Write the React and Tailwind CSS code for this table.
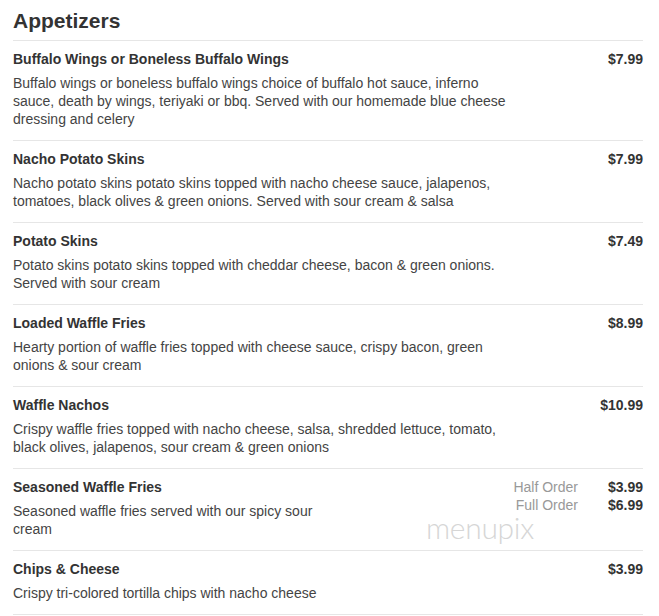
import React from "react";

const items = [
  {
    name: "Buffalo Wings or Boneless Buffalo Wings",
    desc: "Buffalo wings or boneless buffalo wings choice of buffalo hot sauce, inferno sauce, death by wings, teriyaki or bbq. Served with our homemade blue cheese dressing and celery",
    prices: [{ price: "$7.99" }],
  },
  {
    name: "Nacho Potato Skins",
    desc: "Nacho potato skins potato skins topped with nacho cheese sauce, jalapenos, tomatoes, black olives & green onions. Served with sour cream & salsa",
    prices: [{ price: "$7.99" }],
  },
  {
    name: "Potato Skins",
    desc: "Potato skins potato skins topped with cheddar cheese, bacon & green onions. Served with sour cream",
    prices: [{ price: "$7.49" }],
  },
  {
    name: "Loaded Waffle Fries",
    desc: "Hearty portion of waffle fries topped with cheese sauce, crispy bacon, green onions & sour cream",
    prices: [{ price: "$8.99" }],
  },
  {
    name: "Waffle Nachos",
    desc: "Crispy waffle fries topped with nacho cheese, salsa, shredded lettuce, tomato, black olives, jalapenos, sour cream & green onions",
    prices: [{ price: "$10.99" }],
  },
  {
    name: "Seasoned Waffle Fries",
    desc: "Seasoned waffle fries served with our spicy sour cream",
    prices: [
      { label: "Half Order", price: "$3.99" },
      { label: "Full Order", price: "$6.99" },
    ],
    watermark: true,
  },
  {
    name: "Chips & Cheese",
    desc: "Crispy tri-colored tortilla chips with nacho cheese",
    prices: [{ price: "$3.99" }],
  },
];

const MenuItem = ({ item }) => {
  const multi = item.prices.length > 1;
  return (
    <div className="relative flex justify-between border-t border-[#e6e6e6] pt-[9px] pb-[12px]">
      <div className={multi ? "w-[315px]" : "w-[504px]"}>
        <h3 className="text-[14px] leading-[18px] font-bold text-[#333]">{item.name}</h3>
        <p className="mt-[6px] text-[14px] leading-[18px] text-[#444]">{item.desc}</p>
      </div>
      <div className="flex flex-col">
        {item.prices.map((p) => (
          <div key={p.price} className="flex items-center justify-end gap-[19px] text-[14px] leading-[18px]">
            {p.label && <span className="text-[#999]">{p.label}</span>}
            <span className={"font-bold text-[#333] text-right" + (multi ? " w-[46px]" : "")}>{p.price}</span>
          </div>
        ))}
      </div>
      {item.watermark && (
        <span className="absolute left-[413px] top-[43px] text-[30px] leading-[30px] font-light text-[#d6d6d6] font-['Lato',sans-serif] tracking-[-0.3px]">
          menupix
        </span>
      )}
    </div>
  );
};

const App = () => {
  return (
    <div className="min-h-screen bg-white pl-[13px] pr-[16px] font-['Liberation_Sans',Arial,sans-serif]">
      {/* заголовок секции */}
      <h1 className="pt-[7px] pb-[6px] text-[21px] leading-[27px] font-bold text-[#333]">Appetizers</h1>
      <div className="border-b border-[#e6e6e6]">
        {items.map((item) => (
          <MenuItem key={item.name} item={item} />
        ))}
      </div>
    </div>
  );
};

export default App;
